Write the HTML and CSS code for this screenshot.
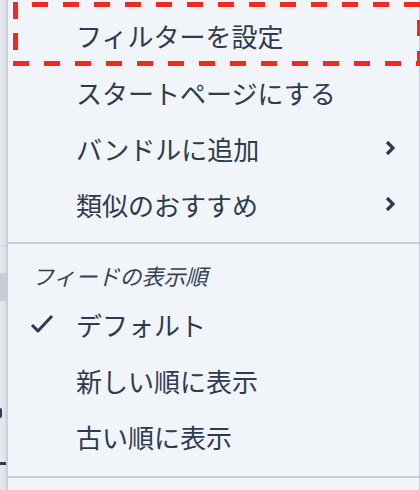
FILE: index.html
```html
<!DOCTYPE html>
<html lang="ja">
<head>
  <meta charset="UTF-8">
  <meta name="viewport" content="width=device-width, initial-scale=1.0">
  <title>フィードメニュー</title>
  <link rel="stylesheet" href="styles.css">
</head>
<body>
  <div class="page-edge">
    <span class="edge-rule"></span>
    <span class="edge-block"></span>
    <span class="edge-glyph edge-glyph-a"></span>
    <span class="edge-glyph edge-glyph-b"></span>
  </div>

  <div class="menu">
    <div class="menu-item is-focused">フィルターを設定</div>
    <div class="menu-item">スタートページにする</div>
    <div class="menu-item">バンドルに追加
      <svg class="chevron" viewBox="0 0 10 16"><polyline points="2,2 8,8 2,14"/></svg>
    </div>
    <div class="menu-item">類似のおすすめ
      <svg class="chevron" viewBox="0 0 10 16"><polyline points="2,2 8,8 2,14"/></svg>
    </div>

    <hr class="menu-divider">

    <div class="menu-heading">フィードの表示順</div>
    <div class="menu-item is-checked">
      <svg class="check" viewBox="0 0 24 20"><polyline points="2,11 8,17 22,2"/></svg>デフォルト
    </div>
    <div class="menu-item">新しい順に表示</div>
    <div class="menu-item">古い順に表示</div>

    <hr class="menu-divider last">
  </div>
</body>
</html>
```

FILE: styles.css
```css
body {
  margin: 0;
  height: 490px;
  overflow: hidden;
  display: flex;
  background: #e2e6ed;
  font-family: "Noto Sans CJK JP", "Noto Sans", sans-serif;
  color: #2c3a52;
}

/* sliver of the page behind the menu */
.page-edge {
  position: relative;
  width: 7px;
  flex: none;
  background: linear-gradient(to right, #e4e8ee 0, #e1e5ec 4px, #cdd3dd 7px);
}
.edge-rule {
  position: absolute;
  left: 0;
  right: 0;
  top: 245px;
  height: 1px;
  background: #c9cfd9;
}
.edge-block {
  position: absolute;
  left: 0;
  right: 0;
  top: 273px;
  height: 28px;
  background: #c8ced8;
}
.edge-glyph {
  position: absolute;
  left: 0;
  background: #2f3d57;
}
.edge-glyph-a {
  top: 408px;
  width: 2px;
  height: 10px;
  border-radius: 0 4px 4px 0;
}
.edge-glyph-b {
  top: 462px;
  width: 6px;
  height: 3px;
}

.menu {
  flex: 1;
  display: flex;
  flex-direction: column;
  background: #f1f4f9;
  border-left: 1px solid #c6cdd8;
  border-right: 1px solid #c3cad6;
}

.menu-item {
  display: flex;
  align-items: center;
  height: 56px;
  flex: none;
  box-sizing: border-box;
  padding: 0 24px 0 68px;
  font-size: 26px;
  white-space: nowrap;
}

/* keyboard focus ring: long dashes drawn as tiled gradients */
.menu-item.is-focused {
  height: 64px;
  margin: 2px -3px -2px 5px;
  padding: 3px 0 0 63px;
  background:
    linear-gradient(to right, #f12a20 16px, transparent 16px) 19px 0 / 31px 5px repeat-x,
    linear-gradient(to right, #f12a20 16px, transparent 16px) 0 100% / 31px 5px repeat-x,
    linear-gradient(to bottom, #f12a20 17px, transparent 17px) 0 0 / 5px 31px repeat-y,
    linear-gradient(to bottom, #f12a20 16px, transparent 16px) 100% 18px / 5px 31px repeat-y;
}
.menu-item.is-checked {
  padding-left: 22px;
}

.chevron {
  width: 10px;
  height: 16px;
  margin-left: auto;
  fill: none;
  stroke: #2c3a52;
  stroke-width: 3.2;
}
.check {
  width: 24px;
  height: 20px;
  margin-right: 22px;
  fill: none;
  stroke: #2c3a52;
  stroke-width: 3;
  stroke-linejoin: round;
}

.menu-divider {
  flex: none;
  height: 2px;
  margin: 10px 0 0;
  border: 0;
  background: #c9d0db;
}
.menu-divider.last {
  margin-top: 12px;
}

.menu-heading {
  padding: 16px 0 6px 24px;
  line-height: 30px;
  font-size: 22px;
  font-style: italic;
  color: #33415a;
}
```
